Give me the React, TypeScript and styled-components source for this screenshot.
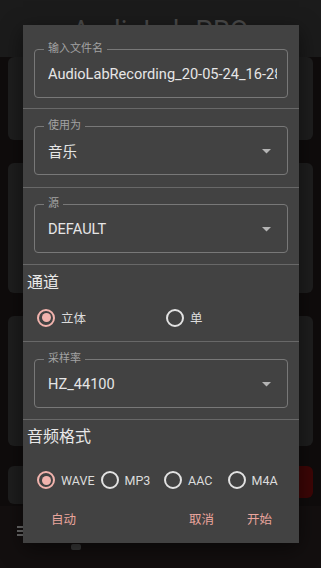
import React from "react";
import styled, { createGlobalStyle } from "styled-components";

const GlobalStyle = createGlobalStyle`
  html, body {
    margin: 0;
    padding: 0;
    background: #0f0c0c;
    font-family: Roboto, "Noto Sans CJK SC", sans-serif;
  }
  * {
    box-sizing: border-box;
  }
`;

type Option = { label: string; checked?: boolean };

const channels: Option[] = [{ label: "立体", checked: true }, { label: "单" }];
const formats: Option[] = [
  { label: "WAVE", checked: true },
  { label: "MP3" },
  { label: "AAC" },
  { label: "M4A" },
];

const Arrow = () => (
  <svg width="9" height="5" viewBox="0 0 9 5">
    <path d="M0 0 L9 0 L4.5 4.5 Z" fill="#b4b4b4" />
  </svg>
);

const Field: React.FC<{ label: string; value: string; select?: boolean }> = ({
  label,
  value,
  select,
}) => (
  <FieldBox>
    <FieldLabel>{label}</FieldLabel>
    <FieldValue>{value}</FieldValue>
    {select && (
      <ArrowWrap>
        <Arrow />
      </ArrowWrap>
    )}
  </FieldBox>
);

const App: React.FC = () => {
  return (
    <>
      <GlobalStyle />
      <Screen>
        <Header>
          <Title>AudioLab PRO</Title>
        </Header>
        <Body>
          <Card $h={83} />
          <Card $h={130} />
          <Card $h={130} />
          <ControlRow>
            <Card $h={38} $grow />
            <RecordButton />
          </ControlRow>
        </Body>
        <BottomBar>
          <Burger>
            <span />
            <span />
            <span />
          </Burger>
          <BarIcon />
        </BottomBar>

        <Dialog>
          <Section $top={24} $bottom={10}>
            <Field label="输入文件名" value="AudioLabRecording_20-05-24_16-28" />
          </Section>
          <Section $top={17} $bottom={12}>
            <Field label="使用为" value="音乐" select />
          </Section>
          <Section $top={16} $bottom={11}>
            <Field label="源" value="DEFAULT" select />
          </Section>
          <GroupSection>
            <GroupTitle>通道</GroupTitle>
            <RadioGrid $cols={2} $col={129} $top={14}>
              {channels.map((o) => (
                <RadioItem key={o.label}>
                  <Ring $checked={o.checked} />
                  <RadioText>{o.label}</RadioText>
                </RadioItem>
              ))}
            </RadioGrid>
          </GroupSection>
          <Section $top={17} $bottom={11}>
            <Field label="采样率" value="HZ_44100" select />
          </Section>
          <FormatSection>
            <GroupTitle>音频格式</GroupTitle>
            <RadioGrid $cols={4} $col={63.5} $top={23}>
              {formats.map((o) => (
                <RadioItem key={o.label}>
                  <Ring $checked={o.checked} />
                  <RadioText>{o.label}</RadioText>
                </RadioItem>
              ))}
            </RadioGrid>
          </FormatSection>
          <Actions>
            <ActionButton>自动</ActionButton>
            <Spacer />
            <ActionButton>取消</ActionButton>
            <ActionButton>开始</ActionButton>
          </Actions>
        </Dialog>
      </Screen>
    </>
  );
};

export default App;

const Screen = styled.div`
  position: relative;
  width: 321px;
  height: 568px;
  overflow: hidden;
  background: #0f0c0c;
  display: flex;
  flex-direction: column;
`;

const Header = styled.header`
  height: 57px;
  background: #1b1b1b;
  display: flex;
  justify-content: center;
  align-items: center;
  flex-shrink: 0;
`;

const Title = styled.h1`
  margin: 0;
  font-size: 27px;
  font-weight: 400;
  color: #4a4a4a;
  letter-spacing: 0.3px;
  margin-top: 4px;
`;

const Body = styled.main`
  display: flex;
  flex-direction: column;
  gap: 23px;
  padding: 0 8px;
`;

const Card = styled.div<{ $h: number; $grow?: boolean }>`
  height: ${(p) => p.$h}px;
  background: #1e1e1e;
  border-radius: 6px;
  flex: ${(p) => (p.$grow ? 1 : "none")};
`;

const ControlRow = styled.div`
  display: flex;
  gap: 10px;
  margin-top: -3px;
`;

const RecordButton = styled.div`
  width: 60px;
  height: 32px;
  border-radius: 6px;
  background: #3d0606;
`;

const BottomBar = styled.footer`
  flex: 1;
  margin-top: 2px;
  background: #130f0f;
  display: flex;
  align-items: flex-start;
  padding: 20px 0 0 17px;
  gap: 48px;
`;

const Burger = styled.div`
  display: flex;
  flex-direction: column;
  gap: 2px;
  span {
    display: block;
    width: 6px;
    height: 2px;
    background: #6a6a6a;
  }
`;

const BarIcon = styled.div`
  width: 10px;
  height: 6px;
  margin-top: 18px;
  background: #3a3a3a;
  border-radius: 2px;
`;

const Dialog = styled.div`
  position: absolute;
  left: 23px;
  top: 25px;
  width: 276px;
  height: 518px;
  background: #424242;
  display: flex;
  flex-direction: column;
  box-shadow: 0 6px 20px rgba(0, 0, 0, 0.5);
`;

const Section = styled.section<{ $top: number; $bottom: number }>`
  padding: ${(p) => p.$top}px 11px ${(p) => p.$bottom}px;
  border-bottom: 1px solid #686868;
`;

const FieldBox = styled.div`
  position: relative;
  height: 49px;
  border: 1px solid #787878;
  border-radius: 4px;
  display: flex;
  align-items: center;
  padding: 0 28px 0 13px;
`;

const FieldLabel = styled.span`
  position: absolute;
  top: -8px;
  left: 9px;
  padding: 0 4px;
  background: #424242;
  font-size: 11px;
  line-height: 14px;
  color: #a3a3a3;
`;

const FieldValue = styled.span`
  flex: 1;
  overflow: hidden;
  white-space: nowrap;
  font-size: 14.6px;
  color: #e6e6e6;
  margin-right: -18px;
`;

const ArrowWrap = styled.span`
  position: absolute;
  right: 16px;
  top: 22px;
  display: flex;
`;

const GroupSection = styled.section`
  height: 77px;
  padding: 7px 0 0 4px;
  border-bottom: 1px solid #686868;
`;

const FormatSection = styled.section`
  padding: 6px 0 0 4px;
`;

const GroupTitle = styled.div`
  font-size: 16px;
  line-height: 22px;
  color: #e8e8e8;
`;

const RadioGrid = styled.div<{ $cols: number; $col: number; $top: number }>`
  display: grid;
  grid-template-columns: repeat(${(p) => p.$cols}, ${(p) => p.$col}px);
  margin-top: ${(p) => p.$top}px;
  padding-left: 10px;
`;

const RadioItem = styled.label`
  display: flex;
  align-items: center;
  gap: 6px;
`;

const Ring = styled.span<{ $checked?: boolean }>`
  width: 18px;
  height: 18px;
  border-radius: 50%;
  border: 2px solid ${(p) => (p.$checked ? "#f1b3ad" : "#e2e2e2")};
  display: flex;
  align-items: center;
  justify-content: center;
  flex-shrink: 0;
  &::after {
    content: "";
    width: 9px;
    height: 9px;
    border-radius: 50%;
    background: ${(p) => (p.$checked ? "#f1b3ad" : "transparent")};
  }
`;

const RadioText = styled.span`
  font-size: 12.5px;
  color: #dcdcdc;
`;

const Actions = styled.div`
  display: flex;
  align-items: center;
  padding: 0 27px 0 28px;
  margin-top: 20px;
  gap: 33px;
`;

const Spacer = styled.div`
  flex: 1;
`;

const ActionButton = styled.button`
  background: none;
  border: none;
  padding: 0;
  font-family: inherit;
  font-size: 12.5px;
  color: #eaa59d;
`;
